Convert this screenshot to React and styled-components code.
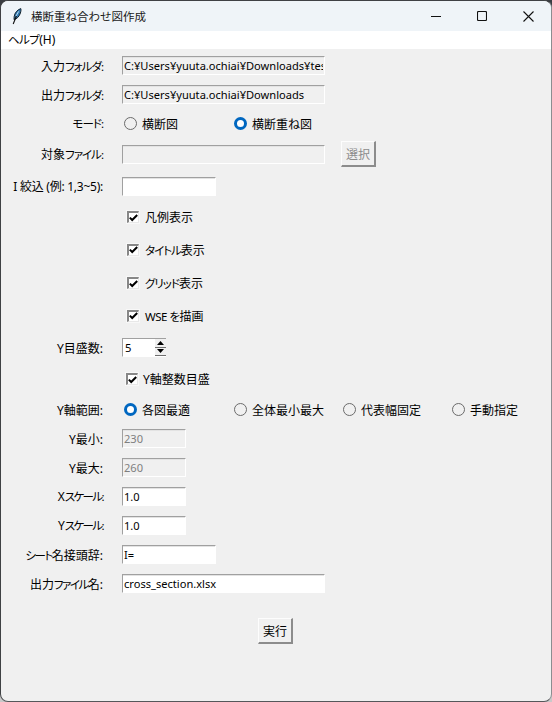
import styled, { createGlobalStyle } from "styled-components";

const GlobalStyle = createGlobalStyle`
  html, body {
    margin: 0;
    padding: 0;
    height: 702px;
    overflow: hidden;
    background: linear-gradient(#3a3d42 0 85%, #c9c9c9 85% 100%);
  }
  * { box-sizing: border-box; }
`;

const fontStack = `"Noto Sans", "Noto Sans CJK JP", sans-serif`;

const Window = styled.div`
  width: 552px;
  height: 702px;
  display: flex;
  flex-direction: column;
  background: #f0f0f0;
  border: 1px solid #3f4144;
  border-right-color: #8b8d90;
  border-bottom-color: #55575a;
  border-radius: 8px;
  overflow: hidden;
  color: #000;
  font-family: ${fontStack};
  font-size: 12px;
  font-feature-settings: "palt";
`;

const TitleBar = styled.div`
  height: 30px;
  flex: none;
  display: flex;
  align-items: center;
  background: #eff4f8;
  padding-left: 11px;
`;

const AppIcon = styled.svg`
  width: 10px;
  height: 17px;
  flex: none;
`;

const TitleText = styled.span`
  margin-left: 9px;
  font-size: 11.5px;
  font-feature-settings: normal;
  color: #1a1a1a;
`;

const WinButtons = styled.div`
  margin-left: auto;
  display: flex;
  height: 100%;
`;

const WinButton = styled.div`
  width: 46px;
  height: 100%;
  display: flex;
  align-items: center;
  justify-content: center;
`;

const MenuBar = styled.div`
  height: 18px;
  flex: none;
  background: #fff;
  padding-left: 7px;
  line-height: 18px;
`;

const Kana = styled.span`
  font-size: 11.5px;
  letter-spacing: ${(p) => p.$sp ?? -1}px;
`;

const Form = styled.div`
  display: flex;
  flex-direction: column;
  padding-top: 2px;
`;

const Row = styled.div`
  height: ${(p) => p.$h}px;
  display: grid;
  grid-template-columns: 102px 1fr;
  column-gap: 19px;
  align-items: center;
`;

const Label = styled.div`
  text-align: right;
  white-space: nowrap;
  letter-spacing: ${(p) => p.$sp ?? 0}px;
`;

const Field = styled.div`
  display: flex;
  align-items: center;
`;

const Entry = styled.input`
  width: ${(p) => p.$w}px;
  height: 19px;
  padding: 0 1px 0 1px;
  margin: 0;
  border-style: solid;
  border-width: 1px;
  border-color: #a0a0a0 #fff #fff #a0a0a0;
  box-shadow: inset 0 1px 0 #e3e3e3;
  outline: none;
  border-radius: 0;
  background: ${(p) => (p.$off ? "#f0f0f0" : "#fff")};
  color: ${(p) => (p.$gray ? "#808080" : "#000")};
  font-family: ${fontStack};
  font-size: 11.1px;
`;

const RaisedButton = styled.button`
  width: 35px;
  height: 26px;
  padding: 0;
  background: #f0f0f0;
  border-style: solid;
  border-width: 1px 2px 2px 1px;
  border-color: #fdfdfd #8c8c8c #8c8c8c #fdfdfd;
  border-radius: 0;
  color: ${(p) => (p.disabled ? "#8c8c8c" : "#000")};
  font-family: ${fontStack};
  font-size: 12px;
  font-feature-settings: normal;
`;

const SelectButton = styled(RaisedButton)`
  margin-left: 16px;
`;

const RunRow = styled.div`
  display: flex;
  padding-left: 257px;
  margin-top: 20px;
`;

const RadioGroup = styled.div`
  display: flex;
  align-items: center;
  padding-left: 2px;
`;

const RadioItem = styled.div`
  width: ${(p) => p.$w}px;
  flex: none;
  display: flex;
  align-items: center;
  gap: 5px;
  white-space: nowrap;
`;

const RadioDot = styled.span`
  width: 13px;
  height: 13px;
  flex: none;
  border-radius: 50%;
  background: ${(p) => (p.$on ? "#fff" : "transparent")};
  border: ${(p) => (p.$on ? "3.5px solid #0067c0" : "1.2px solid #6b6b6b")};
`;

const CheckItem = styled.div`
  display: flex;
  align-items: center;
  gap: ${(p) => (p.$tight ? 5 : 6)}px;
  margin-left: ${(p) => (p.$tight ? 4 : 5)}px;
`;

const CheckBox = styled.span`
  width: 12px;
  height: 12px;
  flex: none;
  display: flex;
  align-items: center;
  justify-content: center;
  background: #fff;
  border-style: solid;
  border-width: 2px 1px 1px 2px;
  border-color: #878787 #e8e8e8 #e8e8e8 #878787;
  outline: 1px solid #f8f8f8;
`;

const Spin = styled.div`
  width: 44px;
  height: 19px;
  display: flex;
  align-items: center;
  background: #fff;
  border-style: solid;
  border-width: 1px 0 1px 1px;
  border-color: #a0a0a0 #fff #fff #a0a0a0;
  padding-left: 2px;
`;

const SpinValue = styled.span`
  flex: 1;
  font-size: 11.2px;
`;

const SpinArrows = styled.div`
  width: 11px;
  height: 100%;
  display: flex;
  flex-direction: column;
  background: #f0f0f0;
`;

const SpinArrow = styled.div`
  flex: 1;
  display: flex;
  align-items: center;
  justify-content: center;
  border-bottom: 1px solid #6e6e6e;
`;

const Tick = () => (
  <svg width="9" height="8" viewBox="0 0 9 8">
    <path d="M0.8 3.6 L3.2 6 L8.2 1" fill="none" stroke="#000" strokeWidth="2" />
  </svg>
);

const Check = ({ tight, children }) => (
  <CheckItem $tight={tight}>
    <CheckBox>
      <Tick />
    </CheckBox>
    <span>{children}</span>
  </CheckItem>
);

const Radio = ({ on, w, children }) => (
  <RadioItem $w={w}>
    <RadioDot $on={on} />
    <span>{children}</span>
  </RadioItem>
);

export default function App() {
  return (
    <>
      <GlobalStyle />
      <Window>
        <TitleBar>
          <AppIcon viewBox="0 0 10 17">
            <path d="M8.8 0.6 C5.6 1.6 2.8 4.6 2.2 8.4 L2 11.6 C4.8 11 7.4 8.4 8.4 5 C8.9 3.4 9.2 1.8 8.8 0.6 Z" fill="#2f78b0" stroke="#14222c" strokeWidth="1" />
            <path d="M6.6 3.4 L4 8" fill="none" stroke="#bcdcf2" strokeWidth="1" />
            <path d="M4.4 8 L1.2 16" fill="none" stroke="#111" strokeWidth="1.1" />
          </AppIcon>
          <TitleText>横断重ね合わせ図作成</TitleText>
          <WinButtons>
            <WinButton>
              <svg width="10" height="10" viewBox="0 0 10 10">
                <path d="M0 5.5 H10" stroke="#111" strokeWidth="1.1" />
              </svg>
            </WinButton>
            <WinButton>
              <svg width="10" height="10" viewBox="0 0 10 10">
                <rect x="0.5" y="0.5" width="9" height="9" rx="1" fill="none" stroke="#111" strokeWidth="1.1" />
              </svg>
            </WinButton>
            <WinButton>
              <svg width="11" height="11" viewBox="0 0 11 11">
                <path d="M0.5 0.5 L10.5 10.5 M10.5 0.5 L0.5 10.5" stroke="#111" strokeWidth="1.1" />
              </svg>
            </WinButton>
          </WinButtons>
        </TitleBar>
        <MenuBar>
          <Kana $sp={-0.6}>ヘルプ</Kana>(H)
        </MenuBar>
        <Form>
          <Row $h={29}>
            <Label>入力<Kana>フォルダ:</Kana></Label>
            <Field>
              <Entry $w={203} $off readOnly value="C:¥Users¥yuuta.ochiai¥Downloads¥test" />
            </Field>
          </Row>
          <Row $h={29}>
            <Label>出力<Kana>フォルダ:</Kana></Label>
            <Field>
              <Entry $w={203} $off readOnly value="C:¥Users¥yuuta.ochiai¥Downloads" />
            </Field>
          </Row>
          <Row $h={29}>
            <Label><Kana>モード:</Kana></Label>
            <RadioGroup>
              <Radio w={110}>横断図</Radio>
              <Radio w={110} on>横断重ね図</Radio>
            </RadioGroup>
          </Row>
          <Row $h={32}>
            <Label>対象<Kana>ファイル:</Kana></Label>
            <Field>
              <Entry $w={203} $off readOnly value="" />
              <SelectButton disabled>選択</SelectButton>
            </Field>
          </Row>
          <Row $h={32}>
            <Label $sp={-0.25}>I 絞込 (例: 1,3~5):</Label>
            <Field>
              <Entry $w={94} readOnly value="" />
            </Field>
          </Row>
          <Row $h={30}>
            <span />
            <Check>凡例表示</Check>
          </Row>
          <Row $h={35}>
            <span />
            <Check><Kana>タイトル</Kana>表示</Check>
          </Row>
          <Row $h={32}>
            <span />
            <Check><Kana>グリッド</Kana>表示</Check>
          </Row>
          <Row $h={33}>
            <span />
            <Check><Kana $sp={-0.5}>WSE を</Kana>描画</Check>
          </Row>
          <Row $h={31}>
            <Label>Y目盛数:</Label>
            <Field>
              <Spin>
                <SpinValue>5</SpinValue>
                <SpinArrows>
                  <SpinArrow>
                    <svg width="7" height="4" viewBox="0 0 7 4">
                      <path d="M3.5 0 L7 4 H0 Z" fill="#000" />
                    </svg>
                  </SpinArrow>
                  <SpinArrow>
                    <svg width="7" height="4" viewBox="0 0 7 4">
                      <path d="M0 0 H7 L3.5 4 Z" fill="#000" />
                    </svg>
                  </SpinArrow>
                </SpinArrows>
              </Spin>
            </Field>
          </Row>
          <Row $h={32}>
            <span />
            <Check tight>Y軸整数目盛</Check>
          </Row>
          <Row $h={29}>
            <Label>Y軸範囲:</Label>
            <RadioGroup>
              <Radio w={110} on>各図最適</Radio>
              <Radio w={109}>全体最小最大</Radio>
              <Radio w={109}>代表幅固定</Radio>
              <Radio w={80}>手動指定</Radio>
            </RadioGroup>
          </Row>
          <Row $h={29}>
            <Label>Y最小:</Label>
            <Field>
              <Entry $w={64} $off $gray readOnly value="230" />
            </Field>
          </Row>
          <Row $h={29}>
            <Label>Y最大:</Label>
            <Field>
              <Entry $w={64} $off $gray readOnly value="260" />
            </Field>
          </Row>
          <Row $h={29}>
            <Label>X<Kana $sp={-1.6}>スケール:</Kana></Label>
            <Field>
              <Entry $w={64} readOnly value="1.0" />
            </Field>
          </Row>
          <Row $h={29}>
            <Label>Y<Kana $sp={-1.6}>スケール:</Kana></Label>
            <Field>
              <Entry $w={64} readOnly value="1.0" />
            </Field>
          </Row>
          <Row $h={29}>
            <Label><Kana $sp={-1.5}>シート</Kana>名接頭辞:</Label>
            <Field>
              <Entry $w={94} readOnly value="I=" />
            </Field>
          </Row>
          <Row $h={29}>
            <Label>出力<Kana $sp={-1.5}>ファイル</Kana>名:</Label>
            <Field>
              <Entry $w={203} readOnly value="cross_section.xlsx" />
            </Field>
          </Row>
        </Form>
        <RunRow>
          <RaisedButton>実行</RaisedButton>
        </RunRow>
      </Window>
    </>
  );
}
